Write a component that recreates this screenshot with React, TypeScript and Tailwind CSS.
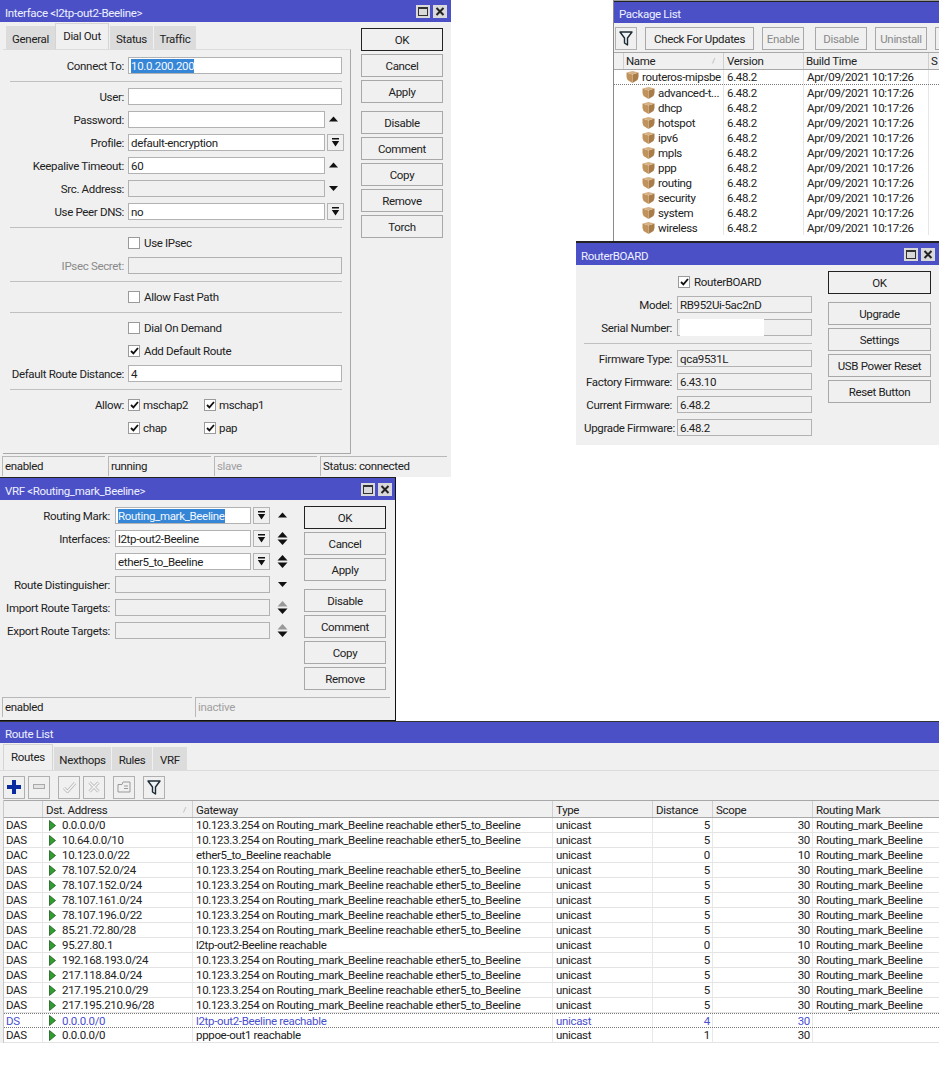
import React from "react";

const TITLE = "bg-[#4b50c6]";

function TitleBtns() {
  return (
    <div className="flex gap-[3px] items-center">
      <span className="w-[14px] h-[13px] bg-[#d9d9d9] flex items-center justify-center">
        <span className="w-[10px] h-[9px] border border-[#333] border-t-2 block" />
      </span>
      <span className="w-[14px] h-[13px] bg-[#d9d9d9] flex items-center justify-center">
        <svg width="10" height="9" viewBox="0 0 10 9"><path d="M1.5 1l7 7M8.5 1l-7 7" stroke="#222" strokeWidth="2" /></svg>
      </span>
    </div>
  );
}

function TitleBar({ text, btns = true, right = "pr-[4px]", h = "h-[22px]" }: { text: string; btns?: boolean; right?: string; h?: string }) {
  return (
    <div className={`${TITLE} ${h} ${right} pl-[5px] flex items-center justify-between text-[#eef0ff] shrink-0`}>
      <span className="pt-[3px]">{text}</span>
      {btns && <TitleBtns />}
    </div>
  );
}

function Btn({ label, primary, muted, w = "w-[82px]", mb = "mb-[3px]" }: { label: string; primary?: boolean; muted?: boolean; w?: string; mb?: string }) {
  return (
    <div
      className={`${w} ${mb} h-[23px] shrink-0 flex items-center justify-center bg-[#f0f0f0] border ${primary ? "border-[#222]" : "border-[#a8a8a8]"} ${muted ? "text-[#8a8a8a]" : "text-[#222]"}`}
    >
      {label}
    </div>
  );
}

function Arrow({ kind }: { kind: string }) {
  const up = kind === "up" || kind === "updown";
  const down = kind === "down" || kind === "updown" || kind === "mutedup";
  const upMuted = kind === "mutedup";
  return (
    <svg width="11" height="15" viewBox="0 0 11 15" className="shrink-0">
      {(up || upMuted) && <path d={kind === "up" ? "M5.5 4.5L10 9.5H1z" : "M5.5 1L10.5 6.5H.5z"} fill={upMuted ? "#999" : "#111"} />}
      {down && <path d={kind === "down" ? "M1 5h9L5.5 10z" : "M.5 8.5h10L5.5 14z"} fill="#111" />}
    </svg>
  );
}

function Drop() {
  return (
    <span className="w-[17px] h-[17px] ml-[2px] shrink-0 border border-[#b4b4b4] bg-[#f0f0f0] flex items-center justify-center">
      <svg width="9" height="9" viewBox="0 0 9 9"><path d="M1 0h7v1.4H1zM.8 3h7.4L4.5 8.5z" fill="#111" /></svg>
    </span>
  );
}

function Input({ value, w, off, sel }: { value?: string; w: string; off?: boolean; sel?: boolean }) {
  return (
    <span className={`${w} h-[17px] shrink-0 border border-[#b2b2b2] pl-[2px] flex items-center whitespace-nowrap overflow-hidden ${off ? "bg-[#f0f0f0]" : "bg-white"} text-[#222]`}>
      {sel ? <span className="bg-[#3586d6] text-[#f4f8ff] h-[14px] flex items-center">{value}</span> : value}
    </span>
  );
}

function Row({ label, lw, gap = "mr-[4px]", muted, children }: { label?: string; lw: string; gap?: string; muted?: boolean; children?: React.ReactNode }) {
  return (
    <div className="flex items-center h-[17px] mb-[6px]">
      <span className={`${lw} ${gap} shrink-0 text-right whitespace-nowrap ${muted ? "text-[#8a8a8a]" : "text-[#222]"}`}>{label}</span>
      {children}
    </div>
  );
}

function Sep() {
  return <div className="h-px mt-[7px] mb-[6px] bg-[#c0c0c0]" />;
}

function Check({ on, label, tight }: { on?: boolean; label: string; tight?: boolean }) {
  return (
    <span className="flex items-center">
      <span className="w-[12px] h-[12px] border border-[#9a9a9a] bg-white flex items-center justify-center shrink-0">
        {on && <svg width="9" height="8" viewBox="0 0 9 8"><path d="M1 4l2.4 2.4L8 1" stroke="#111" strokeWidth="1.8" fill="none" /></svg>}
      </span>
      <span className={`${tight ? "ml-[3px]" : "ml-[4px]"} whitespace-nowrap text-[#222]`}>{label}</span>
    </span>
  );
}

function Tab({ label, active, w }: { label: string; active?: boolean; w: string }) {
  return (
    <div className={`${w} flex items-center justify-center shrink-0 text-[#222] ${active ? "h-[26px] bg-[#f0f0f0] border-x border-t border-[#d4d4d4] pb-[1px]" : "h-[23px] bg-[#dcdcdc] pt-[2px]"}`}>
      {label}
    </div>
  );
}

function StatusCell({ text, w, muted }: { text: string; w: string; muted?: boolean }) {
  return (
    <div className={`${w} h-[20px] shrink-0 border-l border-t border-[#b8b8b8] pl-[2px] pb-px flex items-center ${muted ? "text-[#a0a0a0]" : "text-[#222]"}`}>{text}</div>
  );
}

function PackageIcon() {
  return (
    <svg width="13" height="12" viewBox="0 0 13 12" className="shrink-0">
      <path d="M6.5 3.5L12.5 1.5q.5 5-1 7.5L6.5 12z" fill="#a97c48" />
      <path d="M6.5 3.5L.5 1.5q-.5 5 1 7.5L6.5 12z" fill="#c1935c" />
      <path d="M.5 1.5L6.5 0l6 1.5-6 2z" fill="#d6b184" />
    </svg>
  );
}

function Play() {
  return (
    <svg width="7" height="11" viewBox="0 0 7 11" className="shrink-0">
      <path d="M.5.5L6.5 5.5.5 10.5z" fill="#2f9e2f" stroke="#1d5a1d" strokeWidth=".8" />
    </svg>
  );
}

function Funnel() {
  return (
    <svg width="14" height="15" viewBox="0 0 14 15">
      <path d="M1 1h12L8.5 7v7l-3-2V7z" fill="#eef3f6" stroke="#1c2a33" strokeWidth="1.4" strokeLinejoin="round" />
    </svg>
  );
}

function ToolBtn({ children, className = "" }: { children: React.ReactNode; className?: string }) {
  return (
    <span className={`w-[22px] h-[23px] shrink-0 border border-[#b0b0b0] bg-[#f0f0f0] flex items-center justify-center ${className}`}>{children}</span>
  );
}

function InterfaceWindow() {
  const lw = "w-[114px]";
  return (
    <div className="absolute left-0 top-0 w-[451px] h-[477px] bg-[#f0f0f0] flex flex-col">
      <TitleBar text="Interface <l2tp-out2-Beeline>" />
      <div className="flex h-[432px]">
        <div className="ml-[3px] w-[348px] pt-[2px] flex flex-col">
          <div className="flex items-end h-[25px] pl-[3px]">
            <Tab label="General" w="w-[49px]" />
            <Tab label="Dial Out" active w="w-[54px]" />
            <span className="w-px shrink-0" />
            <Tab label="Status" w="w-[43px]" />
            <span className="w-px shrink-0" />
            <Tab label="Traffic" w="w-[42px]" />
          </div>
          <div className="flex-1 border-t border-r border-b border-[#a8a8a8] border-t-[#dcdcdc] pl-[7px] pt-[7px]">
            <div className="w-[332px]">
              <Row label="Connect To:" lw={lw}><Input value="10.0.200.200" w="w-[214px]" sel /></Row>
              <Sep />
              <Row label="User:" lw={lw}><Input w="w-[214px]" /></Row>
              <Row label="Password:" lw={lw}><Input w="w-[197px]" /><span className="w-[22px] flex justify-center"><Arrow kind="up" /></span></Row>
              <Row label="Profile:" lw={lw}><Input value="default-encryption" w="w-[197px]" /><Drop /></Row>
              <Row label="Keepalive Timeout:" lw={lw}><Input value="60" w="w-[197px]" /><span className="w-[22px] flex justify-center"><Arrow kind="up" /></span></Row>
              <Row label="Src. Address:" lw={lw}><Input off w="w-[197px]" /><span className="w-[22px] flex justify-center"><Arrow kind="down" /></span></Row>
              <Row label="Use Peer DNS:" lw={lw}><Input value="no" w="w-[197px]" /><Drop /></Row>
              <Sep />
              <Row lw={lw}><Check label="Use IPsec" /></Row>
              <Row label="IPsec Secret:" lw={lw} muted><Input off w="w-[214px]" /></Row>
              <Sep />
              <Row lw={lw}><Check label="Allow Fast Path" /></Row>
              <Sep />
              <Row lw={lw}><Check label="Dial On Demand" /></Row>
              <Row lw={lw}><Check on label="Add Default Route" /></Row>
              <Row label="Default Route Distance:" lw={lw}><Input value="4" w="w-[214px]" /></Row>
              <Sep />
              <Row label="Allow:" lw={lw}>
                <span className="w-[76px]"><Check on tight label="mschap2" /></span>
                <Check on tight label="mschap1" />
              </Row>
              <Row lw={lw}>
                <span className="w-[76px]"><Check on tight label="chap" /></span>
                <Check on tight label="pap" />
              </Row>
            </div>
          </div>
        </div>
        <div className="ml-[10px] pt-[6px] flex flex-col">
          <Btn label="OK" primary />
          <Btn label="Cancel" />
          <Btn label="Apply" mb="mb-[8px]" />
          <Btn label="Disable" />
          <Btn label="Comment" />
          <Btn label="Copy" />
          <Btn label="Remove" />
          <Btn label="Torch" />
        </div>
      </div>
      <div className="flex mt-[2px] pl-[2px] gap-[3px]">
        <StatusCell text="enabled" w="w-[103px]" />
        <StatusCell text="running" w="w-[103px]" />
        <StatusCell text="slave" w="w-[103px]" muted />
        <StatusCell text="Status: connected" w="w-[127px]" />
      </div>
    </div>
  );
}

function PackageWindow() {
  const rows = ["advanced-t...", "dhcp", "hotspot", "ipv6", "mpls", "ppp", "routing", "security", "system", "wireless"];
  const ver = "6.48.2";
  const bt = "Apr/09/2021 10:17:26";
  const cell = "h-full flex items-center pl-[3px] border-r border-[#e6e6e6] shrink-0 whitespace-nowrap";
  return (
    <div className="absolute left-[613px] top-0 w-[326px] h-[241px] bg-white border-l border-[#8a8a8a] overflow-hidden">
      <div className="h-[2px] border-b border-[#222] bg-[#9a9a9a]" />
      <TitleBar text="Package List" btns={false} h="h-[21px]" />
      <div className="h-[29px] bg-[#f0f0f0] flex items-start pl-px pt-[4px]">
        <ToolBtn className="w-[20px]"><Funnel /></ToolBtn>
        <span className="ml-[8px]"><Btn label="Check For Updates" w="w-[109px]" mb="mb-0" /></span>
        <span className="ml-[8px]"><Btn label="Enable" w="w-[42px]" mb="mb-0" muted /></span>
        <span className="ml-[11px]"><Btn label="Disable" w="w-[52px]" mb="mb-0" muted /></span>
        <span className="ml-[8px]"><Btn label="Uninstall" w="w-[52px]" mb="mb-0" muted /></span>
        <span className="ml-[8px]"><Btn label="" w="w-[30px]" mb="mb-0" /></span>
      </div>
      <div className="h-[18px] bg-[#f0f0f0] flex border-y border-[#a8a8a8] text-[#222]">
        <span className="w-[10px] border-r border-[#d0d0d0] shrink-0" />
        <span className="w-[100px] flex items-center pl-[2px] justify-between pr-[8px] border-r border-[#d0d0d0] shrink-0">Name<span className="text-[8px] text-[#aaa]">/</span></span>
        <span className="w-[80px] flex items-center pl-[3px] border-r border-[#d0d0d0] shrink-0">Version</span>
        <span className="w-[125px] flex items-center pl-[2px] border-r border-[#d0d0d0] shrink-0">Build Time</span>
        <span className="pl-[2px] flex items-center">S</span>
      </div>
      <div className="h-[15px] flex border-b border-dotted border-[#777] text-[#222]">
        <span className="w-[110px] shrink-0 h-full flex items-center pl-[12px] gap-[3px] border-r border-[#e6e6e6] whitespace-nowrap"><PackageIcon />routeros-mipsbe</span>
        <span className={`w-[80px] ${cell}`}>{ver}</span>
        <span className={`w-[125px] ${cell}`}>{bt}</span>
      </div>
      {rows.map((r) => (
        <div key={r} className="h-[15px] flex text-[#222]">
          <span className="w-[110px] shrink-0 h-full flex items-center pl-[28px] gap-[3px] border-r border-[#e6e6e6] whitespace-nowrap"><PackageIcon />{r}</span>
          <span className={`w-[80px] ${cell}`}>{ver}</span>
          <span className={`w-[125px] ${cell}`}>{bt}</span>
        </div>
      ))}
    </div>
  );
}

function RouterBoardWindow() {
  const lw = "w-[88px]";
  const v = "w-[135px]";
  const g = "mr-[5px]";
  return (
    <div className="absolute left-[576px] top-[241px] w-[363px] h-[204px] bg-[#f0f0f0] border-t-2 border-[#222] flex flex-col">
      <TitleBar text="RouterBOARD" h="h-[22px]" />
      <div className="flex">
        <div className="ml-[8px] w-[228px] pt-[8px]">
          <div className="flex items-center h-[17px] mb-[6px] pl-[94px]"><Check on label="RouterBOARD" /></div>
          <Row label="Model:" lw={lw} gap={g}><Input off value="RB952Ui-5ac2nD" w={v} /></Row>
          <Row label="Serial Number:" lw={lw} gap={g}>
            <span className={`${v} h-[17px] border border-[#b2b2b2] bg-[#f0f0f0] shrink-0`}>
              <span className="block w-[84px] h-[17px] ml-[2px] bg-white -mt-px" />
            </span>
          </Row>
          <Sep />
          <Row label="Firmware Type:" lw={lw} gap={g}><Input off value="qca9531L" w={v} /></Row>
          <Row label="Factory Firmware:" lw={lw} gap={g}><Input off value="6.43.10" w={v} /></Row>
          <Row label="Current Firmware:" lw={lw} gap={g}><Input off value="6.48.2" w={v} /></Row>
          <Row label="Upgrade Firmware:" lw={lw} gap={g}><Input off value="6.48.2" w={v} /></Row>
        </div>
        <div className="ml-[16px] pt-[6px] flex flex-col">
          <Btn label="OK" primary w="w-[103px]" mb="mb-[8px]" />
          <Btn label="Upgrade" w="w-[103px]" />
          <Btn label="Settings" w="w-[103px]" />
          <Btn label="USB Power Reset" w="w-[103px]" />
          <Btn label="Reset Button" w="w-[103px]" />
        </div>
      </div>
    </div>
  );
}

function VrfWindow() {
  const lw = "w-[110px]";
  const g = "mr-[5px]";
  const a = <span className="w-[24px] flex justify-center shrink-0"><Arrow kind="updown" /></span>;
  return (
    <div className="absolute left-0 top-[477px] w-[396px] h-[244px] bg-[#f0f0f0] border-r border-b border-[#111] border-t border-t-[#222] flex flex-col">
      <TitleBar text="VRF <Routing_mark_Beeline>" h="h-[22px]" right="pr-[3px]" />
      <div className="flex h-[196px]">
        <div className="w-[304px] pt-[7px] shrink-0">
          <Row label="Routing Mark:" lw={lw} gap={g}><Input value="Routing_mark_Beeline" w="w-[136px]" sel /><Drop /><span className="w-[24px] flex justify-center shrink-0"><Arrow kind="up" /></span></Row>
          <Row label="Interfaces:" lw={lw} gap={g}><Input value="l2tp-out2-Beeline" w="w-[136px]" /><Drop />{a}</Row>
          <Row lw={lw} gap={g}><Input value="ether5_to_Beeline" w="w-[136px]" /><Drop />{a}</Row>
          <Row label="Route Distinguisher:" lw={lw} gap={g}><Input off w="w-[155px]" /><span className="w-[24px] flex justify-center shrink-0"><Arrow kind="down" /></span></Row>
          <Row label="Import Route Targets:" lw={lw} gap={g}><Input off w="w-[155px]" /><span className="w-[24px] flex justify-center shrink-0"><Arrow kind="mutedup" /></span></Row>
          <Row label="Export Route Targets:" lw={lw} gap={g}><Input off w="w-[155px]" /><span className="w-[24px] flex justify-center shrink-0"><Arrow kind="mutedup" /></span></Row>
        </div>
        <div className="pt-[6px] flex flex-col">
          <Btn label="OK" primary />
          <Btn label="Cancel" />
          <Btn label="Apply" mb="mb-[8px]" />
          <Btn label="Disable" />
          <Btn label="Comment" />
          <Btn label="Copy" />
          <Btn label="Remove" />
        </div>
      </div>
      <div className="flex pl-[2px] gap-[3px] mt-px">
        <StatusCell text="enabled" w="w-[190px]" />
        <StatusCell text="inactive" w="w-[195px]" muted />
      </div>
    </div>
  );
}

const GW = "10.123.3.254 on Routing_mark_Beeline reachable ether5_to_Beeline";
const RM = "Routing_mark_Beeline";
const ROUTES = [
  ["DAS", "0.0.0.0/0", GW, "5", "30", RM],
  ["DAS", "10.64.0.0/10", GW, "5", "30", RM],
  ["DAC", "10.123.0.0/22", "ether5_to_Beeline reachable", "0", "10", RM],
  ["DAS", "78.107.52.0/24", GW, "5", "30", RM],
  ["DAS", "78.107.152.0/24", GW, "5", "30", RM],
  ["DAS", "78.107.161.0/24", GW, "5", "30", RM],
  ["DAS", "78.107.196.0/22", GW, "5", "30", RM],
  ["DAS", "85.21.72.80/28", GW, "5", "30", RM],
  ["DAC", "95.27.80.1", "l2tp-out2-Beeline reachable", "0", "10", RM],
  ["DAS", "192.168.193.0/24", GW, "5", "30", RM],
  ["DAS", "217.118.84.0/24", GW, "5", "30", RM],
  ["DAS", "217.195.210.0/29", GW, "5", "30", RM],
  ["DAS", "217.195.210.96/28", GW, "5", "30", RM],
  ["DS", "0.0.0.0/0", "l2tp-out2-Beeline reachable", "4", "30", ""],
  ["DAS", "0.0.0.0/0", "pppoe-out1 reachable", "1", "30", ""],
];

function RouteWindow() {
  const hc = "h-full flex items-center pl-[3px] border-r border-[#d0d0d0] shrink-0 pt-px";
  const c = "h-full flex items-center border-r border-[#e8e8e8] shrink-0 whitespace-nowrap";
  return (
    <div className="absolute left-0 top-[721px] w-[939px] h-[322px] bg-[#f0f0f0] flex flex-col border-t border-[#333]">
      <TitleBar text="Route List" btns={false} h="h-[21px]" />
      <div className="flex items-end h-[27px] pl-[3px] shrink-0">
        <Tab label="Routes" active w="w-[50px]" />
        <span className="w-px shrink-0" />
        <Tab label="Nexthops" w="w-[57px]" />
        <span className="w-px shrink-0" />
        <Tab label="Rules" w="w-[40px]" />
        <span className="w-px shrink-0" />
        <Tab label="VRF" w="w-[34px]" />
      </div>
      <div className="h-[30px] flex items-center pl-[3px] pt-[3px] shrink-0 border-t border-[#dcdcdc]">
        <ToolBtn>
          <svg width="14" height="14" viewBox="0 0 14 14"><path d="M5 0h4v5h5v4H9v5H5V9H0V5h5z" fill="#0a2aa0" /></svg>
        </ToolBtn>
        <ToolBtn className="ml-[3px]">
          <svg width="12" height="6" viewBox="0 0 12 6"><rect x=".5" y=".5" width="11" height="4" fill="#e4e4e4" stroke="#aaa" /></svg>
        </ToolBtn>
        <ToolBtn className="ml-[8px]">
          <svg width="13" height="12" viewBox="0 0 13 12"><path d="M1 7l3.5 3.5L12 2" stroke="#b8b8b8" strokeWidth="3" fill="none" /><path d="M1 7l3.5 3.5L12 2" stroke="#f6f6f6" strokeWidth="1.4" fill="none" /></svg>
        </ToolBtn>
        <ToolBtn className="ml-[3px]">
          <svg width="12" height="12" viewBox="0 0 12 12"><path d="M1.5 1.5l9 9M10.5 1.5l-9 9" stroke="#b8b8b8" strokeWidth="3" /><path d="M1.5 1.5l9 9M10.5 1.5l-9 9" stroke="#f6f6f6" strokeWidth="1.4" /></svg>
        </ToolBtn>
        <ToolBtn className="ml-[8px]">
          <svg width="14" height="12" viewBox="0 0 14 12"><path d="M1 3.5h4l1-2.5h7v10H1zM7 5h4M7 7.5h4" stroke="#999" strokeWidth="1" fill="none" /></svg>
        </ToolBtn>
        <ToolBtn className="ml-[8px]"><Funnel /></ToolBtn>
      </div>
      <div className="ml-[3px] bg-white flex-1 flex flex-col border-l border-[#c8c8c8] min-h-0">
        <div className="h-[18px] bg-[#f0f0f0] flex border-y border-[#a8a8a8] text-[#222] shrink-0">
          <span className={`w-[39px] ${hc}`} />
          <span className={`w-[150px] ${hc} justify-between pr-[6px]`}>Dst. Address<span className="text-[8px] text-[#aaa]">/</span></span>
          <span className={`w-[360px] ${hc}`}>Gateway</span>
          <span className={`w-[100px] ${hc}`}>Type</span>
          <span className={`w-[60px] ${hc}`}>Distance</span>
          <span className={`w-[100px] ${hc}`}>Scope</span>
          <span className="h-full flex items-center pl-[3px] pt-px">Routing Mark</span>
        </div>
        {ROUTES.map((r, i) => {
          const blue = r[0] === "DS";
          return (
            <div key={i} className={`h-[15px] flex shrink-0 ${blue ? "text-[#4a4fd0] border-y border-dotted border-[#777]" : "text-[#222] border-b border-[#e4e4e4]"}`}>
              <span className={`w-[39px] pl-[2px] ${c}`}>{r[0]}</span>
              <span className={`w-[150px] pl-[6px] gap-[6px] ${c}`}><Play />{r[1]}</span>
              <span className={`w-[360px] pl-[3px] ${c}`}>{r[2]}</span>
              <span className={`w-[100px] pl-[3px] ${c}`}>unicast</span>
              <span className={`w-[60px] justify-end pr-[2px] ${c}`}>{r[3]}</span>
              <span className={`w-[100px] justify-end pr-[2px] ${c}`}>{r[4]}</span>
              <span className="pl-[3px] h-full flex items-center shrink-0 whitespace-nowrap">{r[5]}</span>
            </div>
          );
        })}
      </div>
    </div>
  );
}

export default function App() {
  return (
    <div className="relative w-[939px] h-[1077px] bg-white overflow-hidden font-['Roboto',sans-serif] text-[11.5px] tracking-[-0.33px] leading-[14px]">
      <InterfaceWindow />
      <PackageWindow />
      <RouterBoardWindow />
      <VrfWindow />
      <RouteWindow />
    </div>
  );
}
